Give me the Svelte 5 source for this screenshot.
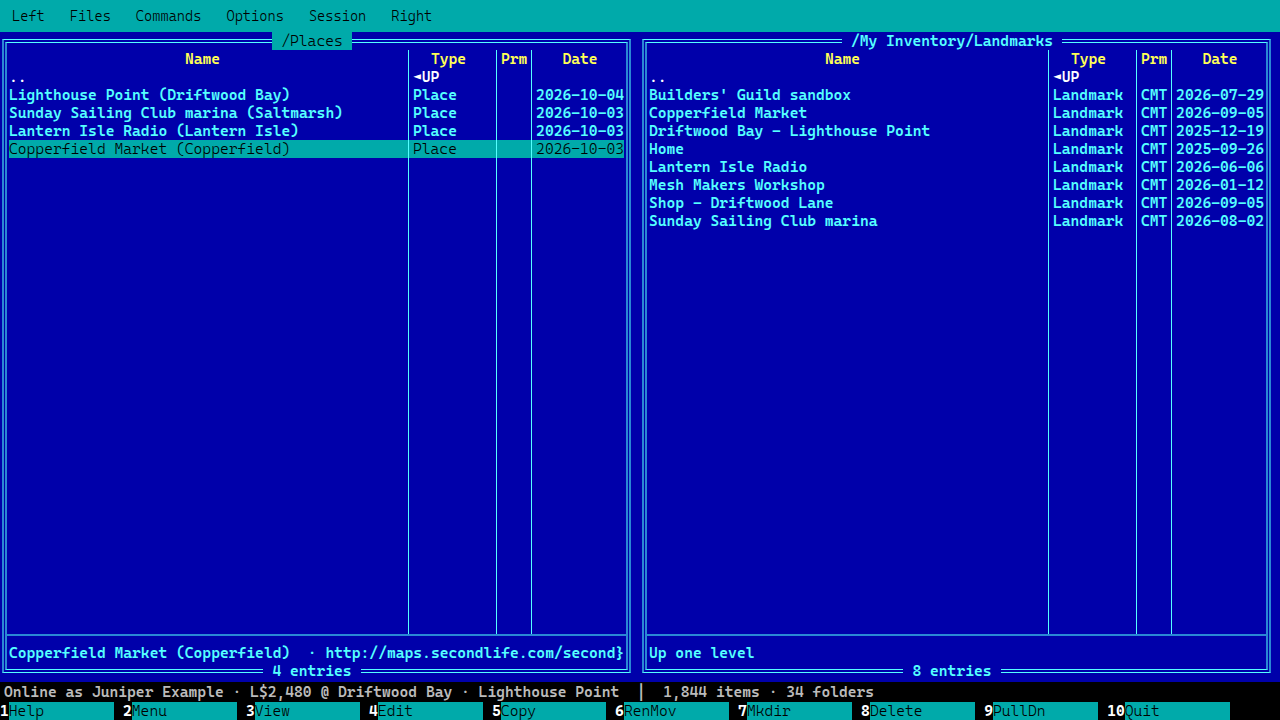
<script>
    const menus = ['Left', 'Files', 'Commands', 'Options', 'Session', 'Right'];
    const keys = ['Help', 'Menu', 'View', 'Edit', 'Copy', 'RenMov', 'Mkdir', 'Delete', 'PullDn', 'Quit'];

    let active = $state(0);

    const panels = $state([
        {
            path: '/Places',
            cursor: 3,
            entries: [
                { name: 'Lighthouse Point (Driftwood Bay)', type: 'Place', prm: '', date: '2026-10-04', url: 'http://maps.secondlife.com/second}' },
                { name: 'Sunday Sailing Club marina (Saltmarsh)', type: 'Place', prm: '', date: '2026-10-03' },
                { name: 'Lantern Isle Radio (Lantern Isle)', type: 'Place', prm: '', date: '2026-10-03' },
                { name: 'Copperfield Market (Copperfield)', type: 'Place', prm: '', date: '2026-10-03', url: 'http://maps.secondlife.com/second}' }
            ]
        },
        {
            path: '/My Inventory/Landmarks',
            cursor: -1,
            entries: [
                { name: "Builders' Guild sandbox", type: 'Landmark', prm: 'CMT', date: '2026-07-29' },
                { name: 'Copperfield Market', type: 'Landmark', prm: 'CMT', date: '2026-09-05' },
                { name: 'Driftwood Bay - Lighthouse Point', type: 'Landmark', prm: 'CMT', date: '2025-12-19' },
                { name: 'Home', type: 'Landmark', prm: 'CMT', date: '2025-09-26' },
                { name: 'Lantern Isle Radio', type: 'Landmark', prm: 'CMT', date: '2026-06-06' },
                { name: 'Mesh Makers Workshop', type: 'Landmark', prm: 'CMT', date: '2026-01-12' },
                { name: 'Shop - Driftwood Lane', type: 'Landmark', prm: 'CMT', date: '2026-09-05' },
                { name: 'Sunday Sailing Club marina', type: 'Landmark', prm: 'CMT', date: '2026-08-02' }
            ]
        }
    ]);

    function select(p, i) {
        active = p;
        panels[p].cursor = i;
    }

    function info(panel) {
        const entry = panel.entries[panel.cursor];
        if (!entry) return 'Up one level';
        return entry.url ? `${entry.name}  · ${entry.url}` : entry.name;
    }

    function onKeydown(e) {
        const panel = panels[active];
        if (e.key === 'Tab') {
            e.preventDefault();
            active = 1 - active;
        }
        // -1 is the ".." row
        if (e.key === 'ArrowUp') panel.cursor = Math.max(panel.cursor - 1, -1);
        if (e.key === 'ArrowDown') panel.cursor = Math.min(panel.cursor + 1, panel.entries.length - 1);
    }
</script>

<svelte:window onkeydown={onKeydown} />

<div class="commander">
    <nav class="menubar">
        {#each menus as menu}
            <button>{menu}</button>
        {/each}
    </nav>

    <main class="panels">
        {#each panels as panel, p}
            <section class="panel" class:active={active === p}>
                <div class="frame">
                    <div class="frame-inner">
                        <div class="listing">
                            <table>
                                <thead>
                                    <tr>
                                        <th class="name">Name</th>
                                        <th class="type">Type</th>
                                        <th class="prm">Prm</th>
                                        <th class="date">Date</th>
                                    </tr>
                                </thead>
                                <tbody>
                                    <tr class="up" class:selected={active === p && panel.cursor === -1} onclick={() => select(p, -1)}>
                                        <td class="name">..</td>
                                        <td class="type">◄UP</td>
                                        <td class="prm"></td>
                                        <td class="date"></td>
                                    </tr>
                                    {#each panel.entries as entry, i}
                                        <tr class:selected={active === p && panel.cursor === i} onclick={() => select(p, i)}>
                                            <td class="name">{entry.name}</td>
                                            <td class="type">{entry.type}</td>
                                            <td class="prm">{entry.prm}</td>
                                            <td class="date">{entry.date}</td>
                                        </tr>
                                    {/each}
                                    <tr class="filler"><td></td><td></td><td></td><td></td></tr>
                                </tbody>
                            </table>
                        </div>
                        <div class="info">{info(panel)}</div>
                    </div>
                </div>
                <div class="caption top"><h2>{panel.path}</h2></div>
                <div class="caption bottom"><span>{panel.entries.length} entries</span></div>
            </section>
        {/each}
    </main>

    <div class="status">Online as Juniper Example · L$2,480 @ Driftwood Bay · Lighthouse Point  │  1,844 items · 34 folders</div>

    <footer class="keys">
        {#each keys as key, i}
            <button><b>{i + 1}</b><span>{key}</span></button>
        {/each}
    </footer>
</div>

<style>
    :global(body) {
        margin: 0;
        background: #000;
    }

    .commander {
        --blue: #0000aa;
        --teal: #00aaaa;
        --cyan: #55ffff;
        --dim: #2a88d4;
        display: flex;
        flex-direction: column;
        min-height: 100vh;
        background: #000;
        color: var(--cyan);
        font: 600 15px/18px "Cascadia Mono", "DejaVu Sans Mono", monospace;
    }

    button {
        margin: 0;
        padding: 0;
        border: none;
        background: none;
        color: #000;
        font: inherit;
        font-weight: 350;
        cursor: pointer;
    }

    .menubar {
        display: flex;
        gap: 25px;
        height: 32px;
        padding: 0 12px;
        background: var(--teal);
    }

    .menubar button {
        font-size: 14px;
    }

    .panels {
        flex: 1;
        display: grid;
        grid-template-columns: 1fr 1fr;
        background: var(--blue);
    }

    .panel {
        position: relative;
        display: flex;
        padding: 7px 9px 9px 2px;
        min-width: 0;
    }

    .frame,
    .frame-inner {
        flex: 1;
        display: flex;
        min-width: 0;
        border: solid var(--cyan);
        border-width: 1px 2px;
        border-left-color: var(--dim);
        border-right-color: var(--dim);
    }

    .frame {
        padding: 2px 1px;
    }

    .frame-inner {
        flex-direction: column;
        padding-top: 7px;
    }

    .listing {
        flex: 1;
        display: grid;
        padding: 0 2px;
        border-bottom: 2px solid var(--dim);
    }

    table {
        width: 100%;
        height: 100%;
        table-layout: fixed;
        border-spacing: 0;
    }

    tr {
        height: 18px;
        cursor: default;
    }

    th,
    td {
        box-sizing: border-box;
        padding: 0 0 0 4px;
        border-right: 1px solid var(--cyan);
        white-space: nowrap;
        text-align: left;
    }

    th {
        color: #ffff55;
        font-weight: 600;
        text-align: center;
    }

    th:last-child,
    td:last-child {
        border-right: none;
    }

    .name {
        padding: 0 12px 0 0;
        overflow: hidden;
        text-overflow: ellipsis;
    }

    .type {
        width: 88px;
    }

    th.type {
        padding-right: 12px;
    }

    .prm {
        width: 35px;
    }

    th.prm {
        padding-right: 4px;
    }

    .date {
        width: 92px;
    }

    td.date {
        padding: 0;
        text-align: right;
    }

    .up {
        color: #fff;
    }

    .selected {
        background: var(--teal);
        color: #000;
        font-weight: 350;
    }

    .filler {
        height: 100%;
    }

    .info {
        padding: 8px 2px 7px;
        overflow: hidden;
        white-space: pre;
    }

    /* titles sit over the frame lines */
    .caption {
        position: absolute;
        left: 0;
        right: 16px;
        display: flex;
        justify-content: center;
        pointer-events: none;
    }

    .caption.top {
        top: 0;
    }

    .caption.bottom {
        bottom: 2px;
    }

    .caption h2,
    .caption span {
        margin: 0;
        padding: 0 9px;
        background: var(--blue);
        font: inherit;
    }

    .active .caption h2 {
        background: var(--teal);
        color: #000;
        font-weight: 350;
    }

    .status {
        padding: 1px 4px;
        color: #bbb;
        white-space: pre;
    }

    .keys {
        display: flex;
        gap: 9px;
        padding-right: 50px;
    }

    .keys button {
        flex: 1 1 auto;
        display: flex;
        text-align: left;
    }

    .keys b {
        color: #fff;
        font-weight: 700;
    }

    .keys span {
        flex: 1 0 100px;
        background: var(--teal);
    }
</style>
